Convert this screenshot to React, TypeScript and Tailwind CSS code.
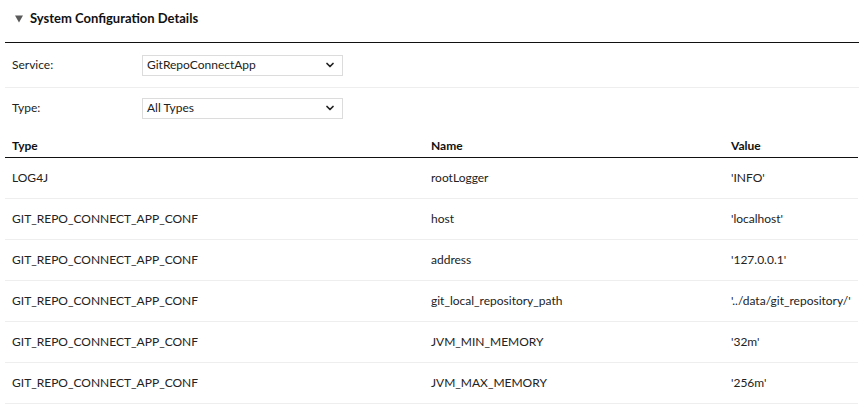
import { ChevronDown } from "lucide-react";

const rows = [
  { type: "LOG4J", name: "rootLogger", value: "'INFO'" },
  { type: "GIT_REPO_CONNECT_APP_CONF", name: "host", value: "'localhost'" },
  { type: "GIT_REPO_CONNECT_APP_CONF", name: "address", value: "'127.0.0.1'" },
  { type: "GIT_REPO_CONNECT_APP_CONF", name: "git_local_repository_path", value: "'../data/git_repository/'" },
  { type: "GIT_REPO_CONNECT_APP_CONF", name: "JVM_MIN_MEMORY", value: "'32m'" },
  { type: "GIT_REPO_CONNECT_APP_CONF", name: "JVM_MAX_MEMORY", value: "'256m'" },
];

function FakeSelect({ value }: { value: string }) {
  return (
    <div className="w-[201px] h-[21px] border border-[#dcdcdc] bg-white flex items-center justify-between pl-[4px] pr-[6px]">
      <span className="text-[12px] text-[#222]">{value}</span>
      <ChevronDown className="w-[12px] h-[12px] text-[#222]" strokeWidth={3.5} />
    </div>
  );
}

export default function App() {
  return (
    <div
      className="w-[859px] h-[409px] bg-white overflow-hidden text-[#222]"
      style={{ fontFamily: "Lato, 'Liberation Sans', sans-serif" }}
    >
      {/* Section header */}
      <div className="h-[43px] flex items-center gap-[7px] pl-[10px] pb-[5px] border-b border-[#111] ml-[5px]">
        <svg width="8" height="8" viewBox="0 0 8 8" className="shrink-0">
          <path d="M0 0.5 H8 L4 7.5 Z" fill="#5a5a5a" />
        </svg>
        <h2 className="text-[13px] font-bold text-[#111]">System Configuration Details</h2>
      </div>

      {/* Filters */}
      <div className="ml-[5px]">
        <div className="h-[45px] flex items-center border-b border-[#eeeeee]">
          <span className="w-[137px] pl-[7px] text-[12px]">Service:</span>
          <FakeSelect value="GitRepoConnectApp" />
        </div>
        <div className="h-[40px] flex items-center">
          <span className="w-[137px] pl-[7px] text-[12px]">Type:</span>
          <FakeSelect value="All Types" />
        </div>
      </div>

      {/* Table */}
      <div className="ml-[5px] mr-[1px]">
        <div className="h-[30px] flex items-end pb-[2px] border-b-[1.5px] border-[#111] text-[12px] font-bold text-[#111]">
          <span className="w-[426px] pl-[7px]">Type</span>
          <span className="w-[300px]">Name</span>
          <span>Value</span>
        </div>
        {rows.map((r, i) => (
          <div key={i} className="h-[41px] flex items-center border-b border-[#eeeeee] text-[12px]">
            <span className="w-[426px] pl-[7px]">{r.type}</span>
            <span className="w-[300px]">{r.name}</span>
            <span>{r.value}</span>
          </div>
        ))}
      </div>
    </div>
  );
}
